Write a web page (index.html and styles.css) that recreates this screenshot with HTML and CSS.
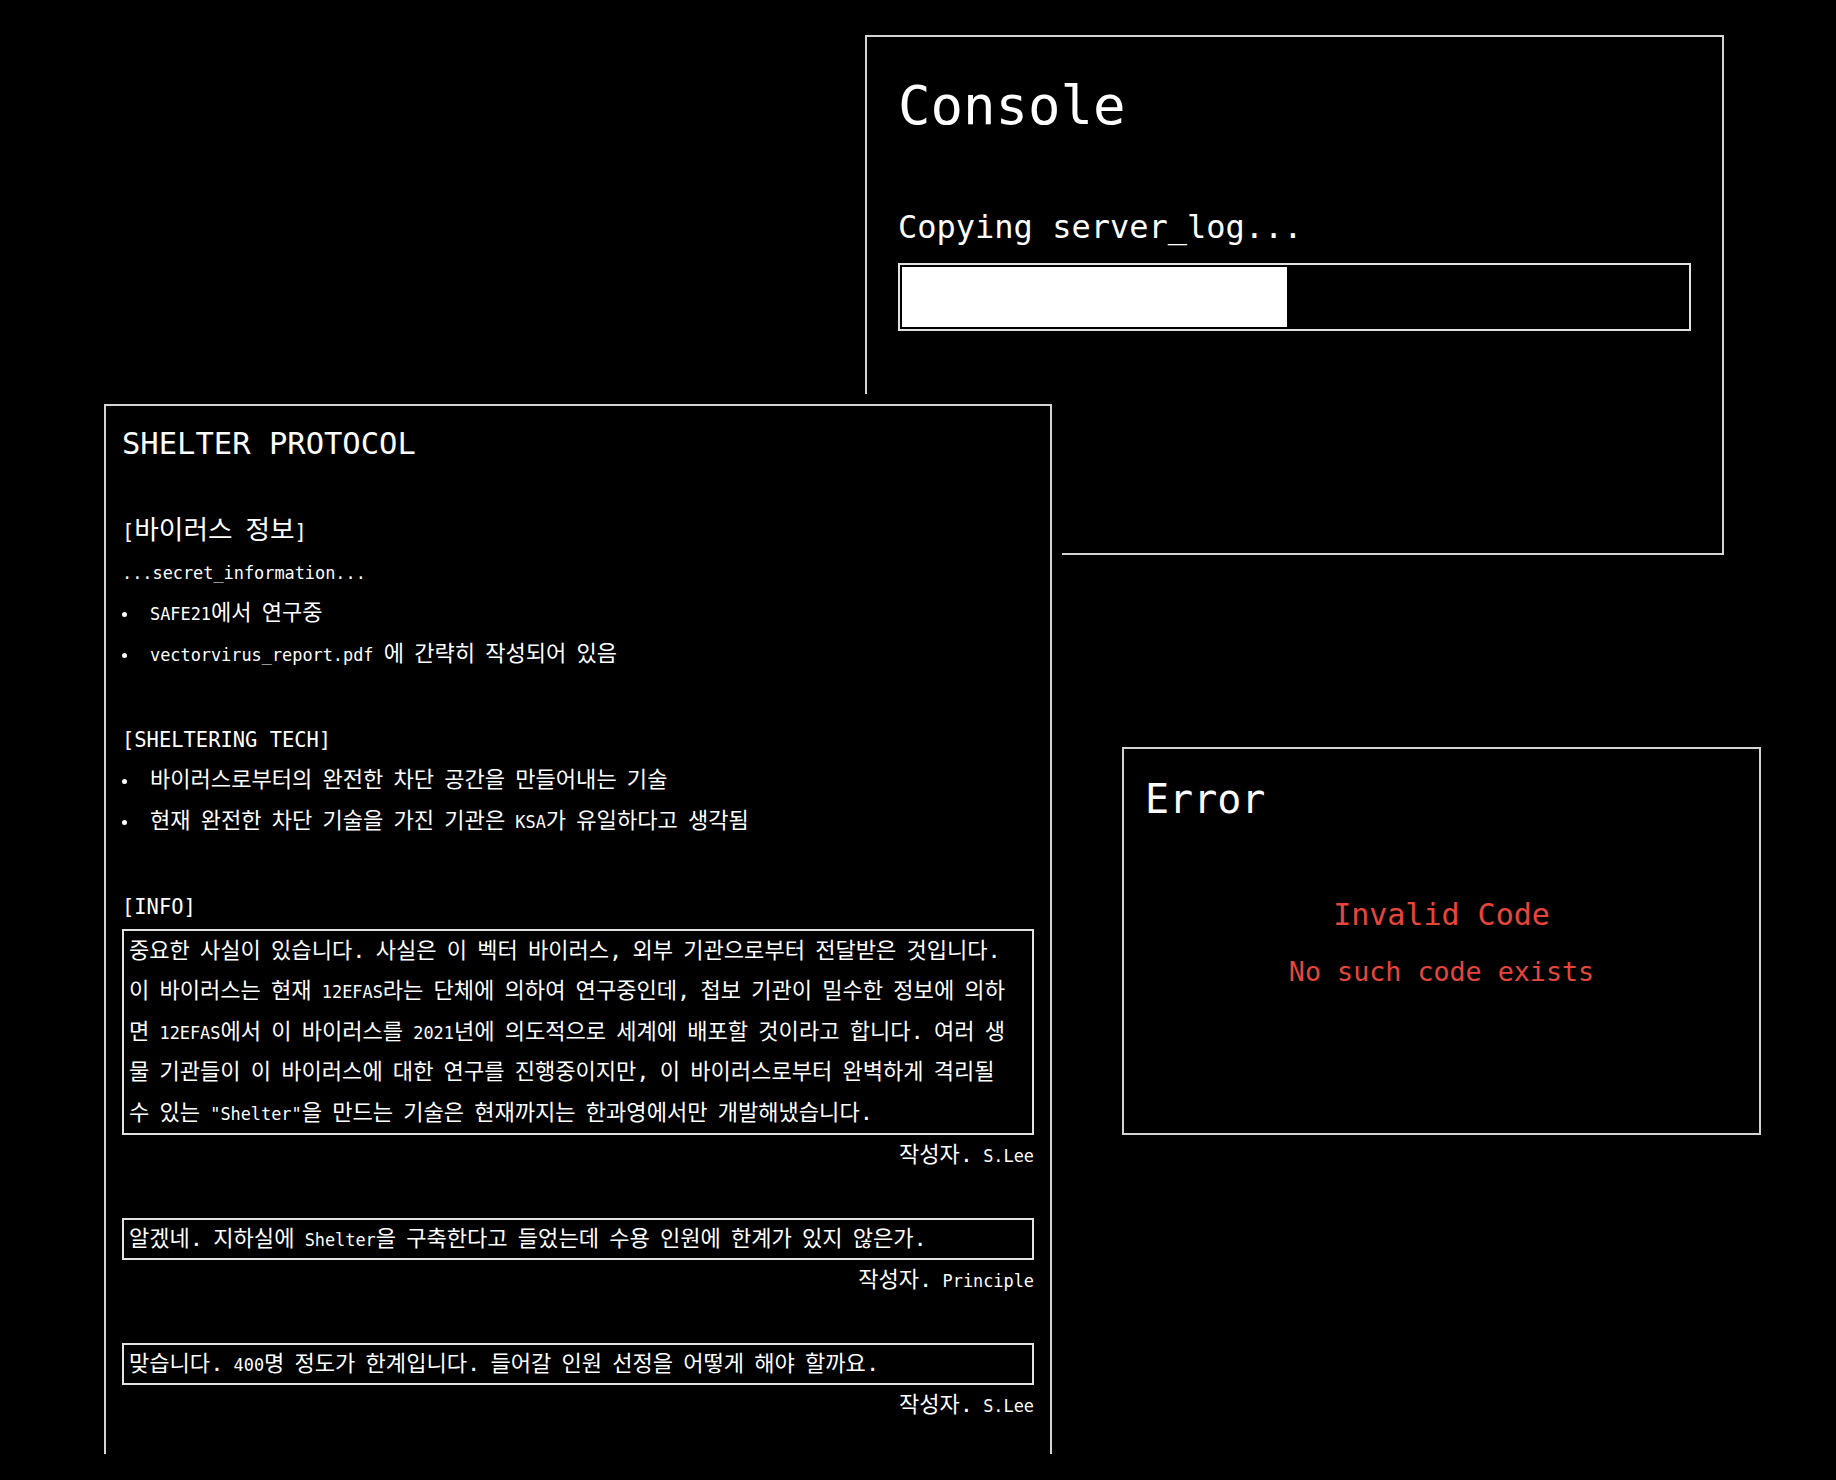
FILE: index.html
```html
<!DOCTYPE html>
<html lang="ko">
<head>
<meta charset="utf-8">
<title>Shelter Protocol</title>
<link rel="stylesheet" href="styles.css">
</head>
<body>
<main class="desktop">
  <section class="window console">
    <h1 class="console-title">Console</h1>
    <p class="console-status">Copying server_log...</p>
    <div class="progress"><div class="progress-fill" style="width:49%"></div></div>
  </section>

  <section class="window shelter">
    <h1 class="shelter-title">SHELTER PROTOCOL</h1>

    <h2 class="section-title"><span class="en">[</span>바이러스 정보<span class="en">]</span></h2>
    <p class="line"><span class="en">...secret_information...</span></p>
    <ul class="bullets">
      <li><span class="en">SAFE21</span>에서 연구중</li>
      <li><span class="en">vectorvirus_report.pdf</span> 에 간략히 작성되어 있음</li>
    </ul>

    <h2 class="section-title"><span class="en">[SHELTERING TECH]</span></h2>
    <ul class="bullets">
      <li>바이러스로부터의 완전한 차단 공간을 만들어내는 기술</li>
      <li>현재 완전한 차단 기술을 가진 기관은 <span class="en">KSA</span>가 유일하다고 생각됨</li>
    </ul>

    <h2 class="section-title"><span class="en">[INFO]</span></h2>
    <p class="note">중요한 사실이 있습니다. 사실은 이 벡터 바이러스, 외부 기관으로부터 전달받은 것입니다.<br>이 바이러스는 현재 <span class="en">12EFAS</span>라는 단체에 의하여 연구중인데, 첩보 기관이 밀수한 정보에 의하<br>면 <span class="en">12EFAS</span>에서 이 바이러스를 <span class="en">2021</span>년에 의도적으로 세계에 배포할 것이라고 합니다. 여러 생<br>물 기관들이 이 바이러스에 대한 연구를 진행중이지만, 이 바이러스로부터 완벽하게 격리될<br>수 있는 <span class="en">"Shelter"</span>을 만드는 기술은 현재까지는 한과영에서만 개발해냈습니다.</p>
    <p class="sig">작성자. <span class="en">S.Lee</span></p>

    <p class="note note-single">알겠네. 지하실에 <span class="en">Shelter</span>을 구축한다고 들었는데 수용 인원에 한계가 있지 않은가.</p>
    <p class="sig">작성자. <span class="en">Principle</span></p>

    <p class="note note-single">맞습니다. <span class="en">400</span>명 정도가 한계입니다. 들어갈 인원 선정을 어떻게 해야 할까요.</p>
    <p class="sig">작성자. <span class="en">S.Lee</span></p>
  </section>

  <section class="window error">
    <h1 class="error-title">Error</h1>
    <p class="error-msg error-code">Invalid Code</p>
    <p class="error-msg error-detail">No such code exists</p>
  </section>
</main>
</body>
</html>
```

FILE: styles.css
```css
* {
  box-sizing: border-box;
  margin: 0;
  padding: 0;
}

html,
body {
  background: #000;
}

body {
  color: #fff;
  font-family: "DejaVu Sans Mono", "Noto Sans CJK KR", monospace;
}

.desktop {
  position: relative;
  height: 1454px;
  overflow: hidden;
}

.window {
  position: absolute;
  background: #000;
  border: 2px solid #d4d4d4;
}

/* Console window */
.console {
  left: 865px;
  top: 35px;
  width: 859px;
  height: 520px;
  padding: 37px 31px 0;
}

.console-title {
  font-size: 54px;
  line-height: 64px;
  font-weight: normal;
}

.console-status {
  margin-top: 69px;
  font-size: 32px;
  line-height: 40px;
}

.progress {
  margin-top: 16px;
  height: 68px;
  border: 2px solid #e2e2e2;
  padding: 2px;
}

.progress-fill {
  height: 100%;
  background: #fff;
}

/* Shelter protocol window */
.shelter {
  left: 104px;
  top: 404px;
  width: 948px;
  height: 1120px;
  padding: 16px 16px 0;
  box-shadow: 0 0 0 10px #000;
  font-size: 22.06px;
  word-spacing: -0.14em;
}

.shelter-title {
  font-size: 30.5px;
  line-height: 44px;
  font-weight: normal;
  word-spacing: 0;
}

.section-title {
  margin-top: 43px;
  font-size: 26.7px;
  line-height: 42px;
  font-weight: normal;
}

.line,
.bullets li {
  line-height: 41px;
}

.bullets {
  list-style: none;
}

.bullets li::before {
  content: "";
  display: inline-block;
  width: 5px;
  height: 5px;
  border-radius: 50%;
  background: #fff;
  margin-right: 23px;
  vertical-align: middle;
}

.note {
  margin-top: 2.5px;
  border: 2px solid #e2e2e2;
  padding: 0 5px;
  line-height: 40.5px;
}

.note-single {
  line-height: 38px;
}

.sig + .note {
  margin-top: 43px;
}

.sig {
  text-align: right;
  line-height: 40px;
}

.en {
  font-size: 0.766em;
  line-height: 1;
  word-spacing: 0;
}

/* Error window */
.error {
  left: 1122px;
  top: 747px;
  width: 639px;
  height: 388px;
  padding: 26px 21px 0;
}

.error-title {
  font-size: 40px;
  line-height: 48px;
  font-weight: normal;
}

.error-msg {
  color: #e8453c;
  text-align: center;
  line-height: 40px;
}

.error-code {
  margin-top: 72px;
  font-size: 30px;
}

.error-detail {
  margin-top: 17px;
  font-size: 26.7px;
}
```
